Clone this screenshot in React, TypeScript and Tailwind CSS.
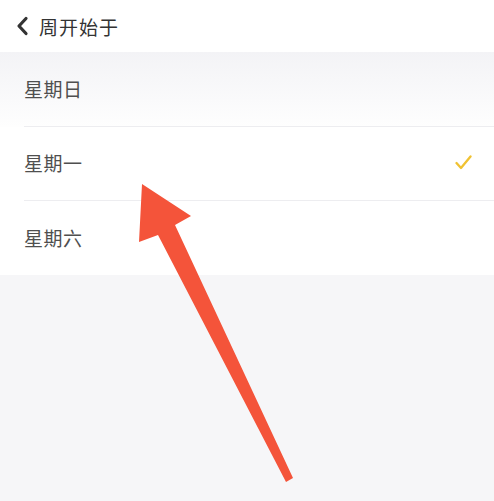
import React from 'react';

const days = [
  { label: '星期日', checked: false, pressed: true },
  { label: '星期一', checked: true, pressed: false },
  { label: '星期六', checked: false, pressed: false },
];

export default function App() {
  return (
    <div
      className="relative w-[494px] h-[501px] overflow-hidden bg-[#f6f6f8]"
      style={{ fontFamily: '"Noto Sans CJK SC", "Noto Sans", sans-serif' }}
    >
      {/* header */}
      <div className="h-[52px] bg-white flex items-center pl-[14px]">
        <svg width="17" height="22" viewBox="0 0 17 22" fill="none">
          <path d="M12 3.5 L5 11 L12 18.5" stroke="#333" strokeWidth="3.2" strokeLinecap="round" strokeLinejoin="round" />
        </svg>
        <span className="ml-[8px] text-[19px] leading-none text-[#333] tracking-[1px]">周开始于</span>
      </div>

      {/* list */}
      <div className="bg-white">
        {days.map((d, i) => (
          <div
            key={d.label}
            className={
              d.pressed
                ? 'h-[75px] bg-gradient-to-b from-[#f3f3f6] to-[#fefefe]'
                : 'h-[74px] bg-white'
            }
          >
            <div
              className={
                'h-full ml-[24px] pr-[22px] flex items-center justify-between ' +
                (i < days.length - 1 ? 'border-b border-[#ededf0]' : '')
              }
            >
              <span className="text-[19px] text-[#4f4f4f] tracking-[0.5px]">{d.label}</span>
              {d.checked && (
                <svg width="17" height="15" viewBox="0 0 17 15" fill="none" className="mb-[2px]">
                  <path d="M1.5 8 L6 13 L15.5 1.5" stroke="#f0c232" strokeWidth="2.3" strokeLinecap="round" strokeLinejoin="round" />
                </svg>
              )}
            </div>
          </div>
        ))}
      </div>

      {/* annotation arrow */}
      <svg className="absolute left-0 top-0 pointer-events-none" width="494" height="501" viewBox="0 0 494 501">
        <polygon
          points="142,184 191,216 175,225 293,478 286,482 158,235 139,242"
          fill="#f4543a"
        />
      </svg>
    </div>
  );
}
